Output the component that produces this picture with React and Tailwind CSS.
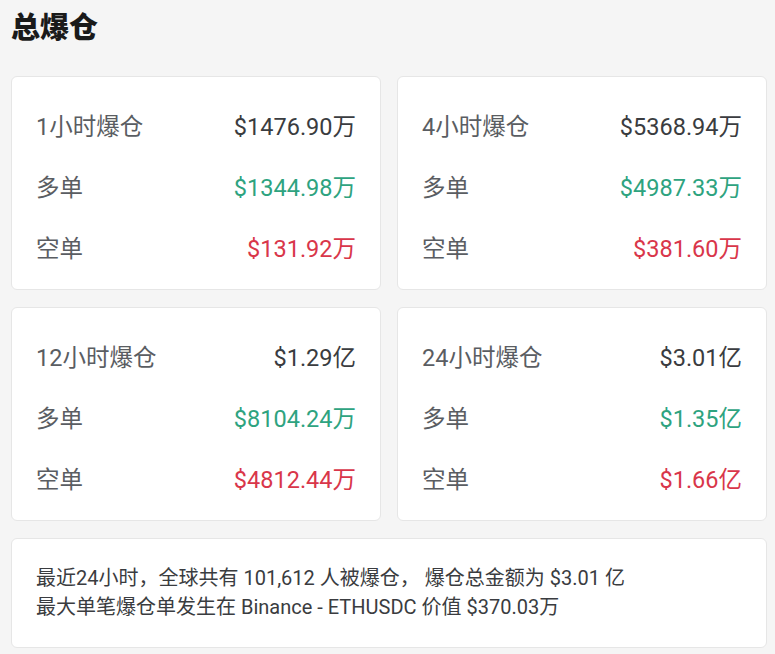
import React from "react";

const cards = [
  { t: "1小时爆仓", total: "$1476.90万", long: "$1344.98万", short: "$131.92万" },
  { t: "4小时爆仓", total: "$5368.94万", long: "$4987.33万", short: "$381.60万" },
  { t: "12小时爆仓", total: "$1.29亿", long: "$8104.24万", short: "$4812.44万" },
  { t: "24小时爆仓", total: "$3.01亿", long: "$1.35亿", short: "$1.66亿" },
];

function Row({ label, value, color }) {
  return (
    <div className="flex items-center justify-between h-[61px]">
      <span className="text-[#5a5d62]">{label}</span>
      <span className={color}>{value}</span>
    </div>
  );
}

function Card({ c }) {
  return (
    <div className="bg-white rounded-[6px] border border-[#e6e6e6] px-[24px] pt-[20px] pb-[9px] text-[23.5px] leading-none">
      <Row label={c.t} value={c.total} color="text-[#3a3c40]" />
      <Row label="多单" value={c.long} color="text-[#2ea37f]" />
      <Row label="空单" value={c.short} color="text-[#d9364a]" />
    </div>
  );
}

export default function App() {
  return (
    <div
      className="w-[775px] h-[654px] bg-[#f5f5f5] pl-[11px] pr-[8px] overflow-hidden"
      style={{ fontFamily: '"Roboto", "Noto Sans CJK SC", sans-serif' }}
    >
      <h1 className="text-[29px] font-black text-[#1a1a1a] pt-[9px] h-[76px] leading-[38px]">总爆仓</h1>
      <div className="grid grid-cols-2 gap-x-[16px] gap-y-[17px]">
        {cards.map((c) => (
          <Card key={c.t} c={c} />
        ))}
      </div>
      <div className="mt-[17px] bg-white rounded-[6px] border border-[#e6e6e6] h-[110px] px-[24px] pt-[25px] text-[20px] leading-[29px] text-[#3a3c40]">
        <div>最近24小时，全球共有 101,612 人被爆仓， 爆仓总金额为 $3.01 亿</div>
        <div>最大单笔爆仓单发生在 Binance - ETHUSDC 价值 $370.03万</div>
      </div>
    </div>
  );
}
